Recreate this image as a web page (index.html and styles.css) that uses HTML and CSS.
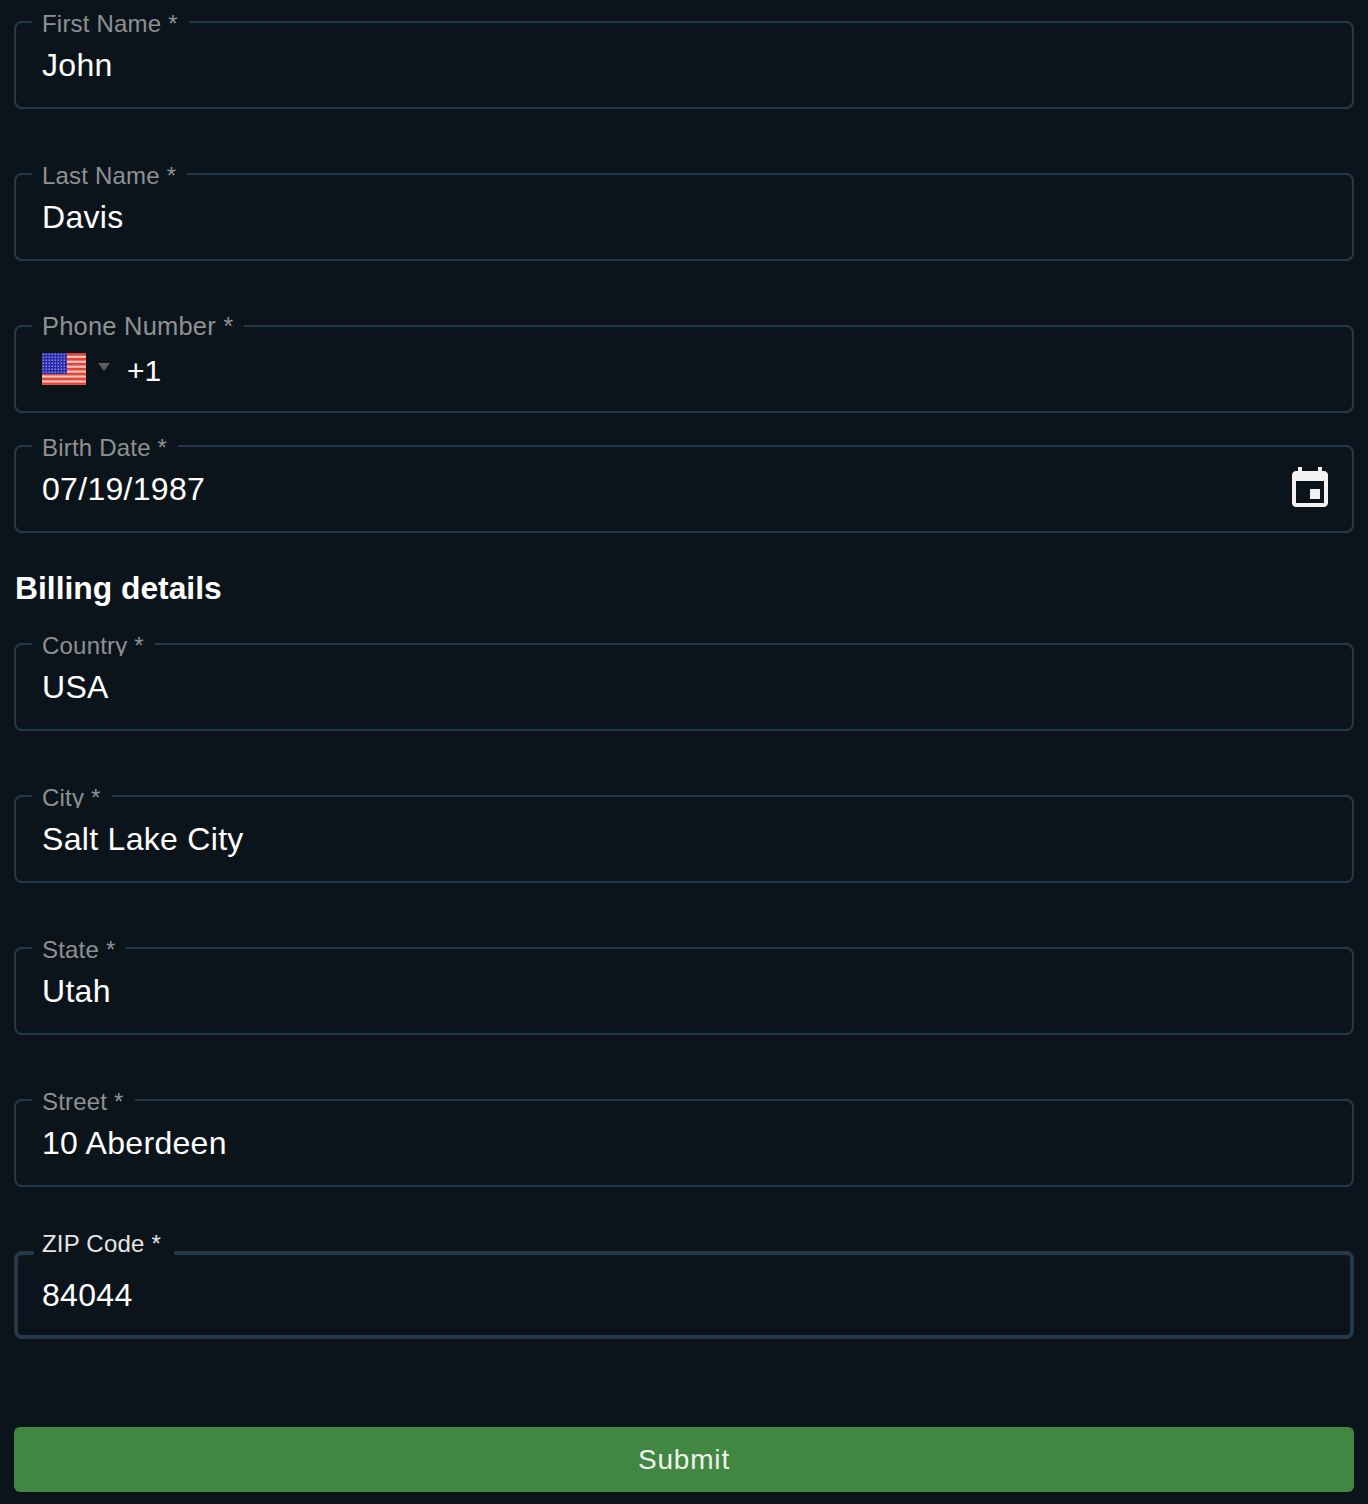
FILE: index.html
```html
<!DOCTYPE html>
<html lang="en">
<head>
  <meta charset="UTF-8" />
  <meta name="viewport" content="width=device-width, initial-scale=1.0"/>
  <title>Checkout details</title>
  <link rel="stylesheet" href="styles.css">
</head>
<body>

  <form class="details-form">
    <div class="field">
      <span class="field-label">First Name *</span>
      <div class="field-value">John</div>
    </div>

    <div class="field">
      <span class="field-label">Last Name *</span>
      <div class="field-value">Davis</div>
    </div>

    <div class="field field-phone">
      <span class="field-label label-large">Phone Number *</span>
      <div class="field-value phone-value">
        <svg class="flag" viewBox="0 0 44 32" aria-hidden="true">
          <defs>
            <pattern id="stripes" width="44" height="4.92" patternUnits="userSpaceOnUse">
              <rect width="44" height="2.46" fill="#f03c2b"/>
              <rect y="2.46" width="44" height="2.46" fill="#fbc6bc"/>
            </pattern>
            <pattern id="stars" width="3" height="3" patternUnits="userSpaceOnUse">
              <rect width="3" height="3" fill="#2a2aa8"/>
              <rect x="0.5" y="0.5" width="1.5" height="1.5" fill="#8a8ae0"/>
            </pattern>
          </defs>
          <rect width="44" height="32" fill="url(#stripes)"/>
          <rect width="25" height="21" fill="url(#stars)"/>
        </svg>
        <span class="caret"></span>
        <span class="dial-code">+1</span>
      </div>
    </div>

    <div class="field field-date">
      <span class="field-label">Birth Date *</span>
      <div class="field-value">07/19/1987</div>
      <svg class="calendar-icon" viewBox="0 0 24 24" aria-hidden="true">
        <path d="M17 12h-5v5h5v-5zM16 1v2H8V1H6v2H5c-1.11 0-1.99.9-1.99 2L3 19c0 1.1.89 2 2 2h14c1.1 0 2-.9 2-2V5c0-1.1-.9-2-2-2h-1V1h-2zm3 18H5V8h14v11z"/>
      </svg>
    </div>

    <h2 class="section-title">Billing details</h2>

    <div class="field">
      <span class="field-label label-clipped">Country *</span>
      <div class="field-value">USA</div>
    </div>

    <div class="field">
      <span class="field-label label-clipped">City *</span>
      <div class="field-value">Salt Lake City</div>
    </div>

    <div class="field">
      <span class="field-label">State *</span>
      <div class="field-value">Utah</div>
    </div>

    <div class="field">
      <span class="field-label">Street *</span>
      <div class="field-value">10 Aberdeen</div>
    </div>

    <div class="field field-focused">
      <span class="field-label">ZIP Code *</span>
      <div class="field-value">84044</div>
    </div>

    <button type="button" class="submit-btn">Submit</button>
  </form>

</body>
</html>
```

FILE: styles.css
```css
body {
  font-family: "Liberation Sans", Arial, sans-serif;
  margin: 0;
  padding: 21px 14px 12px;
  background: #0c141b;
  color: #fff;
}

.details-form {
  display: flex;
  flex-direction: column;
}

.field {
  position: relative;
  display: flex;
  align-items: center;
  justify-content: space-between;
  box-sizing: border-box;
  height: 88px;
  margin-bottom: 64px;
  padding: 0 18px 0 26px;
  border: 2px solid #26394a;
  border-radius: 8px;
}

.field-phone {
  margin-bottom: 32px;
}

.field-date {
  margin-bottom: 0;
}

.field-label {
  position: absolute;
  top: -13px;
  left: 16px;
  height: 28px;
  padding: 0 11px 0 10px;
  overflow: hidden;
  background: #0c141b;
  color: #8e9192;
  font-size: 24px;
  line-height: 28px;
  letter-spacing: 0.2px;
  white-space: nowrap;
}

.label-large {
  font-size: 25.5px;
  top: -16px;
  height: 30px;
  line-height: 30px;
}

.label-clipped {
  top: -13px;
  height: 24px;
}

.field-value {
  font-size: 32px;
  line-height: 40px;
  letter-spacing: 0.3px;
}

.phone-value {
  display: flex;
  align-items: center;
  margin-top: 4px;
}

.flag {
  width: 44px;
  height: 32px;
  margin-top: -4px;
}

.caret {
  width: 0;
  height: 0;
  margin: -8px 17px 0 12px;
  border-left: 6px solid transparent;
  border-right: 6px solid transparent;
  border-top: 8px solid #5c5f60;
}

.dial-code {
  font-size: 30px;
  letter-spacing: 0;
}

.calendar-icon {
  width: 48px;
  height: 48px;
  fill: #f2f2f2;
}

.section-title {
  margin: 37px 0 37px;
  font-size: 31.8px;
  line-height: 36px;
  font-weight: 700;
  letter-spacing: 0;
  padding-left: 1px;
}

.field-focused {
  border-width: 4px;
  padding-left: 24px;
  margin-bottom: 88px;
}

.field-focused .field-label {
  top: -25px;
  left: 16px;
  padding: 0 13px 0 8px;
  color: #e6e6e6;
}

.submit-btn {
  height: 65px;
  padding: 0;
  border: none;
  border-radius: 6px;
  background: #418741;
  color: #eef3ee;
  font-family: inherit;
  font-size: 28px;
  letter-spacing: 0.8px;
  cursor: pointer;
}
```
